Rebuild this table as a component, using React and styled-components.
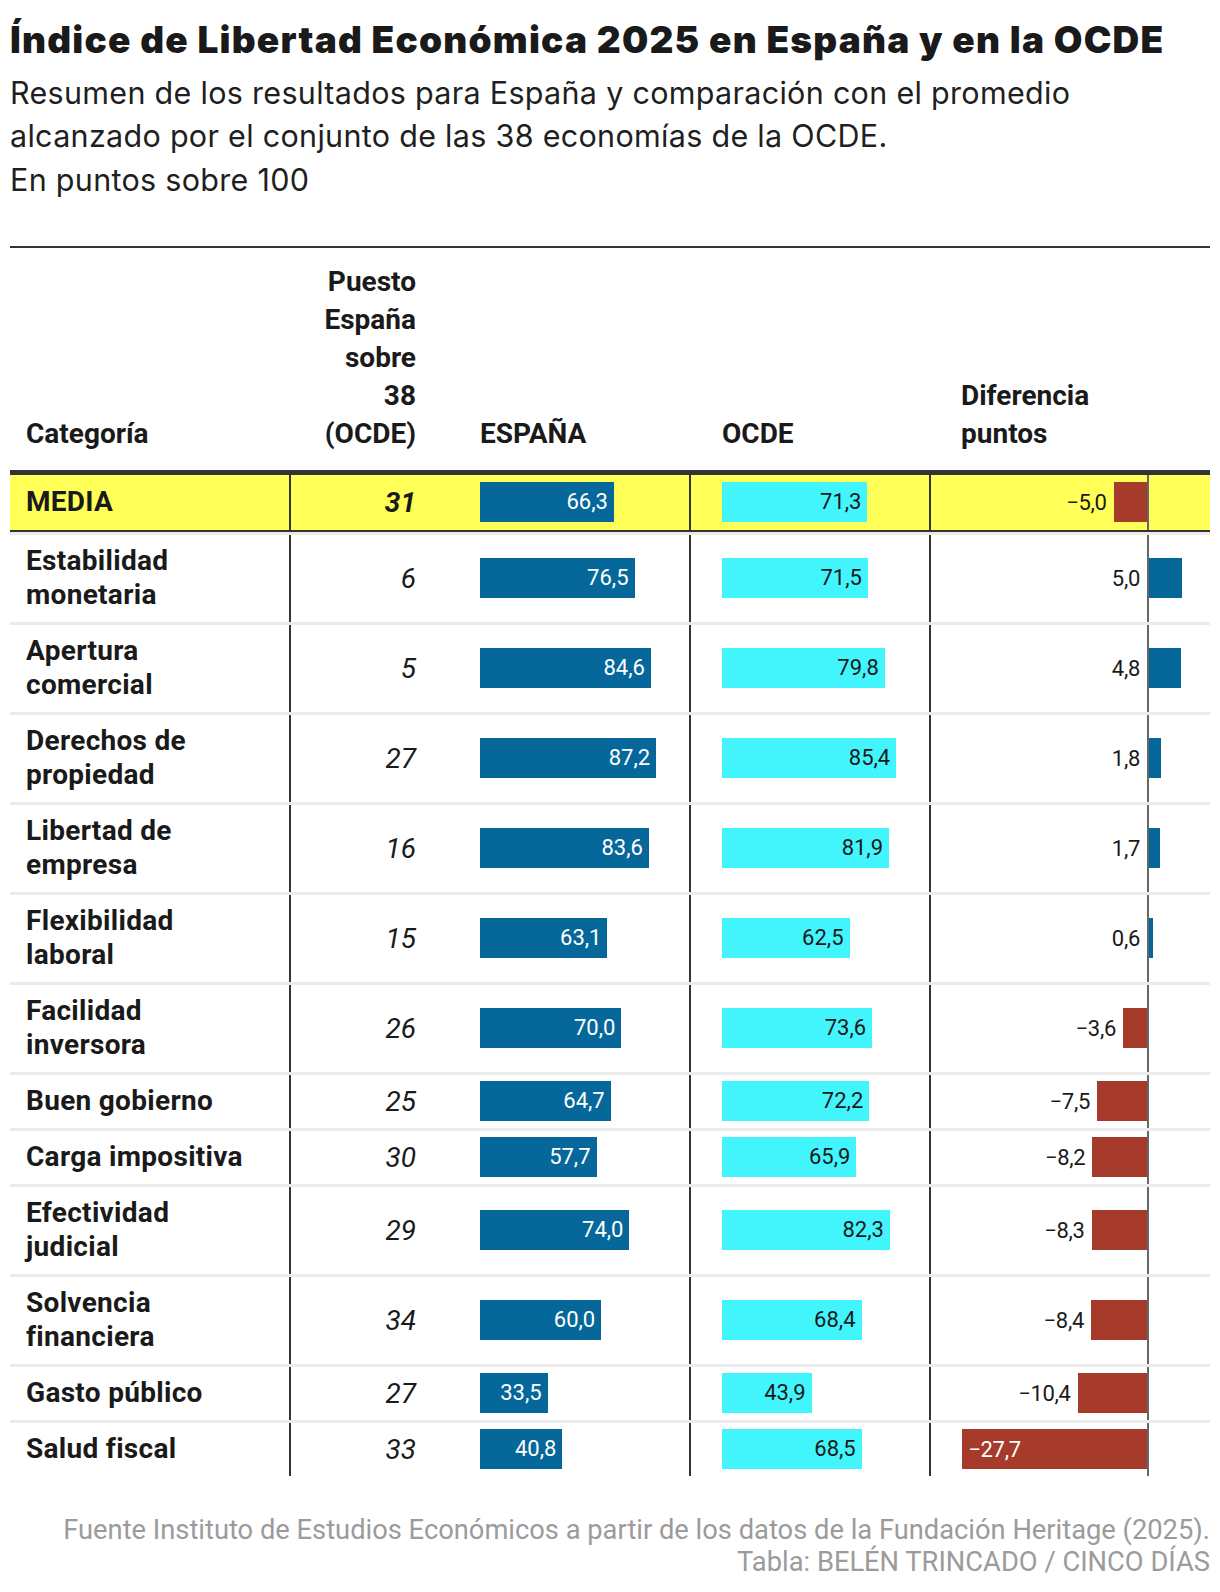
import styled, { createGlobalStyle } from "styled-components";

const GlobalStyle = createGlobalStyle`
  body {
    margin: 0;
    background: #fff;
    color: #1a1a1a;
    font-family: Roboto, "Liberation Sans", sans-serif;
  }
`;

const ROWS = [
  { name: "MEDIA", rank: 31, es: 66.3, oc: 71.3, diff: -5.0, media: true },
  { name: "Estabilidad\nmonetaria", rank: 6, es: 76.5, oc: 71.5, diff: 5.0 },
  { name: "Apertura\ncomercial", rank: 5, es: 84.6, oc: 79.8, diff: 4.8 },
  { name: "Derechos de\npropiedad", rank: 27, es: 87.2, oc: 85.4, diff: 1.8 },
  { name: "Libertad de\nempresa", rank: 16, es: 83.6, oc: 81.9, diff: 1.7 },
  { name: "Flexibilidad\nlaboral", rank: 15, es: 63.1, oc: 62.5, diff: 0.6 },
  { name: "Facilidad\ninversora", rank: 26, es: 70.0, oc: 73.6, diff: -3.6 },
  { name: "Buen gobierno", rank: 25, es: 64.7, oc: 72.2, diff: -7.5 },
  { name: "Carga impositiva", rank: 30, es: 57.7, oc: 65.9, diff: -8.2 },
  { name: "Efectividad\njudicial", rank: 29, es: 74.0, oc: 82.3, diff: -8.3 },
  { name: "Solvencia\nfinanciera", rank: 34, es: 60.0, oc: 68.4, diff: -8.4 },
  { name: "Gasto público", rank: 27, es: 33.5, oc: 43.9, diff: -10.4 },
  { name: "Salud fiscal", rank: 33, es: 40.8, oc: 68.5, diff: -27.7 },
];

const fmt = (n) => n.toFixed(1).replace(".", ",").replace("-", "\u2212");

const COLS = "279px 157px 243px 240px 281px";

export default function App() {
  return (
    <>
      <GlobalStyle />
      <Page>
        <Title>Índice de Libertad Económica 2025 en España y en la OCDE</Title>
        <Subtitle>
          Resumen de los resultados para España y comparación con el promedio
          <br />
          alcanzado por el conjunto de las 38 economías de la OCDE.
          <br />
          En puntos sobre 100
        </Subtitle>

        <Table>
          <HeaderRow>
            <HeadCell $pl={16}>Categoría</HeadCell>
            <HeadCell $right>{"Puesto\nEspaña\nsobre\n38\n(OCDE)"}</HeadCell>
            <HeadCell $pl={34}>ESPAÑA</HeadCell>
            <HeadCell $pl={33}>OCDE</HeadCell>
            <HeadCell $pl={32}>{"Diferencia\npuntos"}</HeadCell>
          </HeaderRow>

          {ROWS.map((r) => {
            const lines = r.name.split("\n").length;
            const dw = Math.abs(r.diff) * 6.67;
            const inside = dw > 150;
            return (
              <Row key={r.name} $media={r.media} $h={r.media ? 55 : lines === 2 ? 87 : 53}>
                <NameCell>{r.name}</NameCell>
                <RankCell $media={r.media}>{r.rank}</RankCell>
                <BarCell $pl={34}>
                  <Bar $color="#06679a" $text="#fff" style={{ width: r.es * 2.02 }}>
                    {fmt(r.es)}
                  </Bar>
                </BarCell>
                <BarCell $pl={31} $line>
                  <Bar $color="#42f4fc" $text="#1a1a1a" style={{ width: r.oc * 2.04 }}>
                    {fmt(r.oc)}
                  </Bar>
                </BarCell>
                <DiffCell>
                  <NegSide>
                    {!inside && <DiffLabel>{fmt(r.diff)}</DiffLabel>}
                    {r.diff < 0 && (
                      <DiffBar $color="#a63a2b" style={{ width: dw }}>
                        {inside && <InsideLabel>{fmt(r.diff)}</InsideLabel>}
                      </DiffBar>
                    )}
                  </NegSide>
                  <PosSide>
                    {r.diff > 0 && <DiffBar $color="#06679a" style={{ width: dw }} />}
                  </PosSide>
                </DiffCell>
              </Row>
            );
          })}
        </Table>

        <Footer>
          Fuente Instituto de Estudios Económicos a partir de los datos de la Fundación Heritage (2025).
          <br />
          Tabla: BELÉN TRINCADO / CINCO DÍAS
        </Footer>
      </Page>
    </>
  );
}

const Page = styled.div`
  width: 1200px;
  padding: 18px 10px 28px;
`;

const Title = styled.h1`
  margin: 0;
  font-family: Inter, Roboto, sans-serif;
  font-weight: 900;
  font-size: 37px;
  line-height: 44px;
  letter-spacing: 1.2px;
  white-space: nowrap;
  color: #1a1a1a;
`;

const Subtitle = styled.p`
  margin: 9px 0 0;
  font-family: Inter, Roboto, sans-serif;
  font-weight: 400;
  font-size: 30.5px;
  line-height: 43.3px;
  letter-spacing: 0.3px;
  color: #1f1f1f;
`;

const Table = styled.div`
  margin-top: 45px;
  border-top: 2px solid #333;
`;

const HeaderRow = styled.div`
  display: grid;
  grid-template-columns: ${COLS};
  padding: 15px 0 17px;
  border-bottom: 5px solid #333;
`;

const HeadCell = styled.div`
  display: flex;
  flex-direction: column;
  justify-content: flex-end;
  padding-left: ${({ $pl }) => $pl || 0}px;
  padding-right: ${({ $right }) => ($right ? 30 : 0)}px;
  text-align: ${({ $right }) => ($right ? "right" : "left")};
  white-space: pre-line;
  font-weight: 700;
  font-size: 28px;
  line-height: 38px;
  color: #1a1a1a;
`;

const Row = styled.div`
  display: grid;
  grid-template-columns: ${COLS};
  height: ${({ $h }) => $h}px;
  background: ${({ $media }) => ($media ? "#ffff57" : "#fff")};
  border-top: ${({ $media }) => ($media ? "none" : "3px solid #ebebeb")};
  border-bottom: ${({ $media }) => ($media ? "2px solid #333" : "none")};
`;

const NameCell = styled.div`
  display: flex;
  align-items: center;
  padding-left: 16px;
  white-space: pre-line;
  font-weight: 700;
  font-size: 28px;
  line-height: 34px;
  letter-spacing: 0.3px;
  color: #1a1a1a;
`;

const RankCell = styled.div`
  display: flex;
  align-items: center;
  justify-content: flex-end;
  padding-right: 30px;
  border-left: 2px solid #333;
  font-style: italic;
  font-weight: ${({ $media }) => ($media ? 700 : 400)};
  font-size: 28px;
  color: #1a1a1a;
`;

const BarCell = styled.div`
  display: flex;
  align-items: center;
  padding-left: ${({ $pl }) => $pl}px;
  border-left: ${({ $line }) => ($line ? "2px solid #333" : "none")};
`;

const Bar = styled.div`
  height: 40px;
  line-height: 40px;
  background: ${({ $color }) => $color};
  color: ${({ $text }) => $text};
  font-size: 22px;
  text-align: right;
  padding-right: 6px;
  box-sizing: border-box;
  white-space: nowrap;
`;

const DiffCell = styled.div`
  display: flex;
  border-left: 2px solid #333;
`;

const NegSide = styled.div`
  width: 216px;
  display: flex;
  align-items: center;
  justify-content: flex-end;
`;

const PosSide = styled.div`
  flex: 1;
  display: flex;
  align-items: center;
  border-left: 2px solid #666;
`;

const DiffLabel = styled.span`
  margin-right: 7px;
  font-size: 22px;
  letter-spacing: -0.3px;
  color: #1a1a1a;
`;

const DiffBar = styled.div`
  height: 40px;
  background: ${({ $color }) => $color};
  display: flex;
  align-items: center;
`;

const InsideLabel = styled.span`
  padding-left: 6px;
  font-size: 22px;
  letter-spacing: -0.3px;
  color: #fff;
`;

const Footer = styled.div`
  margin-top: 38px;
  text-align: right;
  font-size: 27.3px;
  line-height: 32px;
  color: #9b9b9b;
`;
